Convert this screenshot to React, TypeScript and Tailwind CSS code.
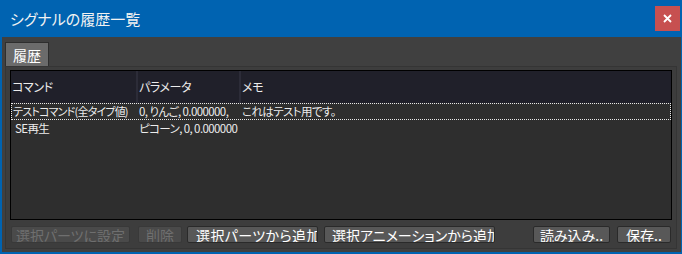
import React from "react";

const rows = [
  { cmd: "テストコマンド(全タイプ値)", param: "0, りんご, 0.000000,", memo: "これはテスト用です。", selected: true },
  { cmd: "SE再生", param: "ピコーン, 0, 0.000000", memo: "", selected: false },
];

export default function App() {
  return (
    <div className="w-[682px] h-[254px] bg-[#0063b1] flex flex-col pl-[2px] pr-[1px] pb-[2px] font-['Noto_Sans_CJK_JP',sans-serif] [font-feature-settings:'palt'] overflow-hidden">
      <div className="h-[37px] flex items-center justify-between pl-[8px] shrink-0">
        <span className="text-[15px] text-[#f2f2f2] leading-none">シグナルの履歴一覧</span>
        <div className="w-[25px] h-[25px] bg-[#c75050] mr-[1px] flex items-center justify-center">
          <svg width="9" height="9" viewBox="0 0 9 9">
            <path d="M1 1 L8 8 M8 1 L1 8" stroke="white" strokeWidth="1.8" />
          </svg>
        </div>
      </div>
      <div className="flex-1 bg-[#404040] flex flex-col pl-[3px] pr-[4px] pt-[5px] pb-[3px] min-h-0">
        <div className="flex shrink-0">
          <div className="h-[24px] w-[44px] bg-[#6b6b6b] border border-[#2e2e2e] border-b-0 text-[14px] text-white flex items-center justify-center leading-none">
            履歴
          </div>
        </div>
        <div className="flex-1 border border-[#353535] bg-[#3d3d3d] flex flex-col pt-[3px] px-[4px] pb-[5px] min-h-0">
          <div className="flex-1 border border-black bg-[#2e2e2e] flex flex-col min-h-0 text-[11.5px] tracking-[-0.6px] text-[#ececec] leading-none">
            <div className="h-[32px] bg-[#20202a] flex shrink-0 text-[12px] tracking-[-0.4px]">
              <div className="w-[125px] flex items-center pl-[1px]">コマンド</div>
              <div className="w-[2px] bg-[#2c2c38]" />
              <div className="w-[101px] flex items-center pl-[1px]">パラメータ</div>
              <div className="w-[2px] bg-[#2c2c38]" />
              <div className="flex-1 flex items-center pl-[1px]">メモ</div>
            </div>
            {rows.map((r, i) => (
              <div
                key={i}
                className={
                  r.selected
                    ? "h-[17px] flex items-center border border-dotted border-[#e8e8e8]"
                    : "h-[17px] flex items-center border border-transparent"
                }
              >
                <div className="w-[126px] pl-[1px] whitespace-nowrap">
                  {r.cmd === "SE再生" ? (
                    <span className="pl-[2px]">{r.cmd}</span>
                  ) : (
                    <span className="text-[11px] tracking-[-0.8px]">{r.cmd}</span>
                  )}
                </div>
                <div className="w-[103px] pl-[1px] whitespace-nowrap">{r.param}</div>
                <div className="flex-1 pl-[1px] whitespace-nowrap">{r.memo}</div>
              </div>
            ))}
          </div>
          <div className="flex mt-[6px] h-[17px] shrink-0 text-[14px] leading-none">
            <div className="ml-[1px] w-[119px] rounded-[2px] bg-[#4a4a4a] border border-[#393939] text-[#6f6f6f] flex items-center justify-center whitespace-nowrap overflow-hidden">
              選択パーツに設定
            </div>
            <div className="ml-[8px] w-[44px] rounded-[2px] bg-[#4a4a4a] border border-[#393939] text-[#6f6f6f] flex items-center justify-center whitespace-nowrap overflow-hidden">
              削除
            </div>
            <div className="ml-[5px] w-[131px] rounded-[2px] bg-[#585858] border border-[#2a2a2a] text-white flex items-center pl-[8px] tracking-[0.4px] whitespace-nowrap overflow-hidden">
              選択パーツから追加
            </div>
            <div className="ml-[6px] w-[171px] rounded-[2px] bg-[#585858] border border-[#2a2a2a] text-white flex items-center pl-[7px] whitespace-nowrap overflow-hidden">
              選択アニメーションから追加
            </div>
            <div className="flex-1" />
            <div className="w-[77px] rounded-[2px] bg-[#585858] border border-[#2a2a2a] text-white flex items-center justify-center whitespace-nowrap overflow-hidden">
              読み込み..
            </div>
            <div className="ml-[7px] mr-[1px] w-[54px] rounded-[2px] bg-[#585858] border border-[#2a2a2a] text-white flex items-center justify-center whitespace-nowrap overflow-hidden">
              保存..
            </div>
          </div>
        </div>
      </div>
    </div>
  );
}
